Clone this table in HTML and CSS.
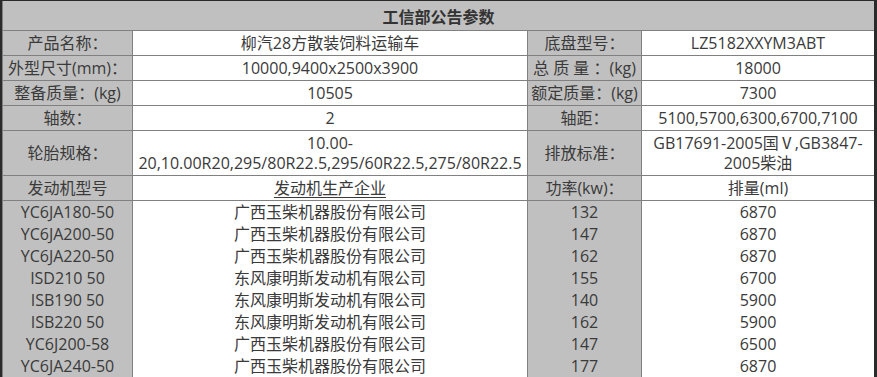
FILE: index.html
```html
<!DOCTYPE html>
<html lang="zh-CN">
<head>
<meta charset="utf-8">
<title>工信部公告参数</title>
<link rel="stylesheet" href="styles.css">
</head>
<body>
<div class="sheet">
  <div class="title">工信部公告参数</div>
  <div class="row">
    <div class="cell lab">产品名称：</div>
    <div class="cell val">柳汽28方散装饲料运输车</div>
    <div class="cell lab">底盘型号：</div>
    <div class="cell val">LZ5182XXYM3ABT</div>
  </div>
  <div class="row">
    <div class="cell lab">外型尺寸(mm)：</div>
    <div class="cell val">10000,9400x2500x3900</div>
    <div class="cell lab">总 质 量 ：(kg)</div>
    <div class="cell val">18000</div>
  </div>
  <div class="row">
    <div class="cell lab">整备质量：(kg)</div>
    <div class="cell val">10505</div>
    <div class="cell lab">额定质量：(kg)</div>
    <div class="cell val">7300</div>
  </div>
  <div class="row">
    <div class="cell lab">轴数：</div>
    <div class="cell val">2</div>
    <div class="cell lab">轴距：</div>
    <div class="cell val">5100,5700,6300,6700,7100</div>
  </div>
  <div class="row tall">
    <div class="cell lab">轮胎规格：</div>
    <div class="cell val">10.00-20,10.00R20,295/80R22.5,295/60R22.5,275/80R22.5</div>
    <div class="cell lab">排放标准：</div>
    <div class="cell val">GB17691-2005国Ⅴ,GB3847-2005柴油</div>
  </div>
  <div class="row">
    <div class="cell lab">发动机型号</div>
    <div class="cell val"><span class="ul">发动机生产企业</span></div>
    <div class="cell lab">功率(kw)：</div>
    <div class="cell val">排量(ml)</div>
  </div>
  <div class="engines">
    <div class="cell lab">YC6JA180-50</div><div class="cell val">广西玉柴机器股份有限公司</div><div class="cell lab">132</div><div class="cell val">6870</div>
    <div class="cell lab">YC6JA200-50</div><div class="cell val">广西玉柴机器股份有限公司</div><div class="cell lab">147</div><div class="cell val">6870</div>
    <div class="cell lab">YC6JA220-50</div><div class="cell val">广西玉柴机器股份有限公司</div><div class="cell lab">162</div><div class="cell val">6870</div>
    <div class="cell lab">ISD210 50</div><div class="cell val">东风康明斯发动机有限公司</div><div class="cell lab">155</div><div class="cell val">6700</div>
    <div class="cell lab">ISB190 50</div><div class="cell val">东风康明斯发动机有限公司</div><div class="cell lab">140</div><div class="cell val">5900</div>
    <div class="cell lab">ISB220 50</div><div class="cell val">东风康明斯发动机有限公司</div><div class="cell lab">162</div><div class="cell val">5900</div>
    <div class="cell lab">YC6J200-58</div><div class="cell val">广西玉柴机器股份有限公司</div><div class="cell lab">147</div><div class="cell val">6500</div>
    <div class="cell lab">YC6JA240-50</div><div class="cell val">广西玉柴机器股份有限公司</div><div class="cell lab">177</div><div class="cell val">6870</div>
  </div>
</div>
</body>
</html>
```
FILE: styles.css
```css
html, body {
  margin: 0;
  padding: 0;
  background: #ffffff;
}
body {
  font-family: "Open Sans", "Noto Sans CJK SC", sans-serif;
  font-size: 16px;
  color: #3a3a3a;
}
.sheet {
  width: 871px;
  height: 376px;
  overflow: hidden;
  border-top: 1px solid #2a2a2a;
  border-left: 2px solid #2a2a2a;
  border-right: 3px solid #2a2a2a;
  padding-left: 1px;
  background: #808080;
  display: flex;
  flex-direction: column;
  gap: 1px;
}
.title {
  flex: 0 0 29px;
  background: #c0c0c0;
  display: flex;
  align-items: center;
  justify-content: center;
  font-weight: bold;
  color: #333333;
  font-family: "Noto Sans CJK SC", sans-serif;
}
.row, .engines {
  display: grid;
  grid-template-columns: 129px 394px 113px 232px;
  column-gap: 1px;
}
.row {
  flex: 0 0 24px;
}
.row.tall {
  flex: 0 0 44px;
}
.engines {
  flex: 0 0 auto;
  grid-auto-rows: 22px;
  row-gap: 0;
}
.cell {
  display: flex;
  align-items: center;
  justify-content: center;
  text-align: center;
  line-height: 20px;
  white-space: normal;
}
.lab {
  background: #c0c0c0;
}
.val {
  background: #ffffff;
}
.ul {
  text-decoration: underline;
  text-underline-offset: 3px;
}
```
